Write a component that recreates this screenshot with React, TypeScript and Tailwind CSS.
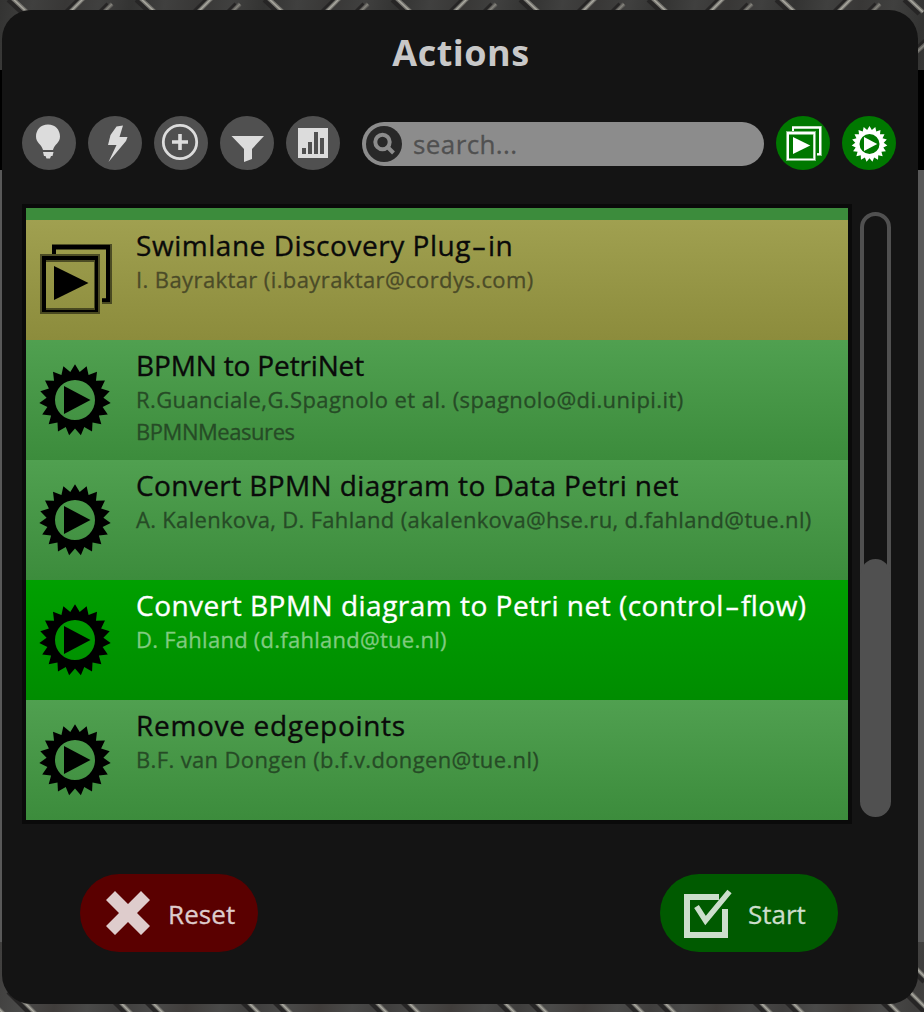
import React from "react";

const gearPath =
  "M" +
  Array.from({ length: 38 }, (_, i) => {
    const r = i % 2 === 0 ? 35.8 : 28.5;
    const a = (i * Math.PI) / 19 - Math.PI / 2;
    return `${(35 + r * Math.cos(a)).toFixed(2)},${(36 + r * Math.sin(a)).toFixed(2)}`;
  }).join("L") +
  "Z";

function GearIcon({ className }: { className: string }) {
  return (
    <svg viewBox="0 0 72 72" className={className + " overflow-visible"} fill="currentColor">
      <path fillRule="evenodd" d={gearPath + "M35 16a20 20 0 1 0 0 40a20 20 0 1 0 0-40Z"} />
      <path d="M24 22L50.5 36L24 50Z" />
    </svg>
  );
}

function PluginIcon({ className }: { className: string }) {
  return (
    <svg viewBox="0 0 72 72" className={className} fill="currentColor" fillRule="evenodd">
      <path opacity="0.5" d="M0 10H60V70H0ZM6 18V64H54V18ZM12 0H72V60H62V54H66V6H16V10H12Z" />
      <path d="M2 12H58V68H2ZM6 16V66H55V16ZM12 1H70V58H62V54.5H66V5H16V10H12Z" />
      <path d="M14 22L48.5 39L14 56Z" />
    </svg>
  );
}

const tiles = [-128, 0, 128, 256, 384, 512, 640, 768, 896];

function Groove({ d, strong }: { d: string; strong?: boolean }) {
  return (
    <g fill="none">
      <path d={d} stroke="#262525" strokeWidth="7" transform="translate(-3 1)" />
      <path d={d} stroke={strong ? "#75746f" : "#62615d"} strokeWidth="4" />
      <path d={d} stroke={strong ? "#a9a89f" : "#84837d"} strokeWidth="1.4" />
    </g>
  );
}

function Strip({ bottom }: { bottom?: boolean }) {
  const id = bottom ? "metalB" : "metalA";
  return (
    <svg className="h-full w-full" viewBox="0 0 924 70">
      <defs>
        <linearGradient id={id} x1="0" x2="64" y1="0" y2="12" gradientUnits="userSpaceOnUse" spreadMethod="reflect">
          <stop offset="0" stopColor={bottom ? "#3f3e3d" : "#333332"} />
          <stop offset="0.5" stopColor={bottom ? "#4a4a49" : "#40403f"} />
          <stop offset="1" stopColor={bottom ? "#403d3b" : "#383736"} />
        </linearGradient>
      </defs>
      <rect width="924" height="70" fill={`url(#${id})`} />
      {tiles.map((x) => (
        <g key={x} transform={`translate(${x} 0)`}>
          {bottom ? (
            <>
              <Groove d="M112 52L134 74" strong />
              <Groove d="M140 48L166 74" strong />
              <Groove d="M142 20L160 38" strong />
            </>
          ) : (
            <>
              <Groove d="M12 -2L27 12" strong />
              <Groove d="M84 -2L70 12" strong />
              <Groove d="M112 4L104 12" />
              <Groove d="M12 60L34 40" />
            </>
          )}
        </g>
      ))}
    </svg>
  );
}

type Row = { title: string; spacing: string; lines: { text: string; spacing: string }[]; plugin?: boolean; active?: boolean };

const rows: Row[] = [
  {
    title: "Swimlane Discovery Plug-in",
    spacing: "tracking-[0.54px]",
    lines: [{ text: "I. Bayraktar (i.bayraktar@cordys.com)", spacing: "tracking-[0.4px]" }],
    plugin: true,
  },
  {
    title: "BPMN to PetriNet",
    spacing: "tracking-[-0.15px]",
    lines: [
      { text: "R.Guanciale,G.Spagnolo et al. (spagnolo@di.unipi.it)", spacing: "tracking-[0.41px]" },
      { text: "BPMNMeasures", spacing: "tracking-[-0.45px]" },
    ],
  },
  {
    title: "Convert BPMN diagram to Data Petri net",
    spacing: "tracking-[0.4px]",
    lines: [{ text: "A. Kalenkova, D. Fahland (akalenkova@hse.ru, d.fahland@tue.nl)", spacing: "tracking-[0.31px]" }],
  },
  {
    title: "Convert BPMN diagram to Petri net (control-flow)",
    spacing: "tracking-[0.49px]",
    lines: [{ text: "D. Fahland (d.fahland@tue.nl)", spacing: "tracking-[0.26px]" }],
    active: true,
  },
  {
    title: "Remove edgepoints",
    spacing: "tracking-[0.69px]",
    lines: [{ text: "B.F. van Dongen (b.f.v.dongen@tue.nl)", spacing: "tracking-[0.36px]" }],
  },
];

function Title({ text }: { text: string }) {
  const [head, tail] = text.split("-");
  return (
    <>
      {head}
      {tail && <span className="inline-block w-[17px] scale-x-[1.6] text-center">-</span>}
      {tail}
    </>
  );
}

const filterIcons = [
  <>
    <path d="M26 8.5C18.5 8.5 14 14 14 20.5C14 27 19.5 28 21 34H31C32.5 28 38 27 38 20.5C38 14 33.5 8.5 26 8.5Z" />
    <path d="M21 36H31.5L30.5 40H29L28 42.5H24.5L23.5 40H22Z" />
  </>,
  <path d="M28.5 10.5L35 9.5L31.5 21H39.5L38 25L20.5 46L28.5 29H20L22.5 19Z" />,
  <g fill="none" stroke="currentColor">
    <circle cx="26" cy="26" r="16.7" strokeWidth="2.8" />
    <path d="M26 18V34M18 26H34" strokeWidth="3.6" />
  </g>,
  <path d="M11.5 20H44L32 33V43L24 46V33Z" />,
  <path fillRule="evenodd" d="M12 12H42V42H12ZM16 32V38H20V32ZM22 26V38H26V26ZM28 16V38H32V16ZM34 22V38H38V22Z" />,
];

export default function App() {
  return (
    <div className="grid h-[1012px] w-[924px] grid-cols-1 grid-rows-1 overflow-hidden font-['Open_Sans','Noto_Sans',sans-serif]">
      <div className="col-start-1 row-start-1 flex flex-col">
        <div className="h-[70px]"><Strip /></div>
        <div className="h-[100px] bg-black" />
        <div className="flex-1 bg-[#595959]" />
        <div className="h-[70px]"><Strip bottom /></div>
      </div>
      <main className="z-10 col-start-1 row-start-1 ml-[2px] mt-[10px] flex h-[994px] w-[916px] flex-col rounded-[29px] bg-[#141414]">
        <h1 className="flex h-[106px] items-start justify-center pl-[2px] pt-[19px] text-[36px] font-bold leading-[48px] tracking-[0.5px] text-[#c8c8c8]">
          <span>Actions</span>
        </h1>
        <div className="flex h-[54px] pl-[20px]">
          <div className="flex gap-[12px]">
            {filterIcons.map((icon, i) => (
              <button key={i} className="size-[54px] rounded-full bg-[#505050] text-[#dcdcdc]">
                <svg viewBox="0 0 54 54" className="size-[54px]" fill="currentColor">{icon}</svg>
              </button>
            ))}
          </div>
          <div className="ml-[22px] mt-[6px] flex h-[44px] w-[402px] items-center rounded-full bg-[#8c8c8c] pl-[3px]">
            <svg viewBox="0 0 38 38" className="size-[38px]" fill="none">
              <circle cx="19" cy="19" r="18" fill="#282828" />
              <circle cx="17.5" cy="17" r="7.2" stroke="#8c8c8c" strokeWidth="4" />
              <path d="M22.5 22L28.5 28" stroke="#8c8c8c" strokeWidth="4" />
            </svg>
            <span className="ml-[10px] text-[26px] leading-[36px] tracking-[0.4px] text-[#505050] [-webkit-text-stroke:0.3px_currentColor]">search...</span>
          </div>
          <button className="ml-[12px] flex size-[54px] items-start rounded-full bg-[#007800] pl-[10px] pt-[10px] text-white">
            <PluginIcon className="size-[36px]" />
          </button>
          <button className="ml-[12px] flex size-[54px] items-start rounded-full bg-[#007800] pl-[10px] pt-[10px] text-white">
            <GearIcon className="size-[36px]" />
          </button>
        </div>
        <div className="ml-[20px] mt-[34px] flex h-[620px]">
          <div className="flex w-[830px] flex-col border-4 border-[#0a0a0a] bg-[#3c8c3c]">
            <div className="h-[12px]" />
            {rows.map((r) => (
              <div
                key={r.title}
                className={
                  "flex h-[120px] pl-[14px] " +
                  (r.plugin ? "bg-linear-to-b from-[#a0a050] to-[#8c8c3c]" : r.active ? "bg-linear-to-b from-[#00a000] to-[#008c00]" : "bg-linear-to-b from-[#50a050] to-[#3c8c3c]")
                }
              >
                {r.plugin ? <PluginIcon className="mt-[24px] size-[72px] shrink-0 text-black" /> : <GearIcon className="mt-[24px] size-[72px] shrink-0 text-black" />}
                <div className="ml-[24px] whitespace-nowrap pt-[6px]">
                  <div className={"h-[37px] text-[28px] leading-[38px] [-webkit-text-stroke:0.35px_currentColor] " + r.spacing + (r.active ? " text-white" : " text-[#0a0a0a]")}>
                    <Title text={r.title} />
                  </div>
                  {r.lines.map((l) => (
                    <div
                      key={l.text}
                      className={"text-[22px] leading-[32px] [-webkit-text-stroke:0.3px_currentColor] " + l.spacing + (r.active ? " text-[#80cb80]" : r.plugin ? " text-[#4b4b28]" : " text-[#264b26]")}
                    >
                      {l.text}
                    </div>
                  ))}
                </div>
              </div>
            ))}
          </div>
          <div className="ml-[8px] mt-[8px] flex h-[605px] w-[31px] items-end rounded-full border-4 border-[#505050]">
            <div className="-mx-[3px] -mb-[3px] h-[257px] w-[29px] shrink-0 rounded-full bg-[#505050]" />
          </div>
        </div>
        <div className="mt-[50px] flex justify-between pl-[78px] pr-[80px]">
          <button className="flex h-[78px] w-[178px] items-center rounded-full bg-[#5a0000] pl-[25px] text-[26px] text-[#decccc]">
            <svg viewBox="0 0 46 46" className="size-[46px] shrink-0">
              <path d="M10 1L23 14L36 1L45 10L32 23L45 36L36 45L23 32L10 45L1 36L14 23L1 10Z" fill="currentColor" />
            </svg>
            <span className="ml-[17px] mt-[3px] tracking-[0.1px] [-webkit-text-stroke:0.3px_currentColor]">Reset</span>
          </button>
          <button className="flex h-[78px] w-[178px] items-center rounded-full bg-[#005a00] pl-[24px] text-[26px] text-[#ccdecc]">
            <svg viewBox="0 0 48 48" className="size-[48px] shrink-0 overflow-visible" fill="none" stroke="currentColor">
              <path d="M35 8H3V46H41V20" strokeWidth="6" />
              <path d="M12.5 17.5L21.5 31.5L45.5 2.5" strokeWidth="5.5" />
            </svg>
            <span className="ml-[16px] mt-[3px] [-webkit-text-stroke:0.3px_currentColor]">Start</span>
          </button>
        </div>
      </main>
    </div>
  );
}
